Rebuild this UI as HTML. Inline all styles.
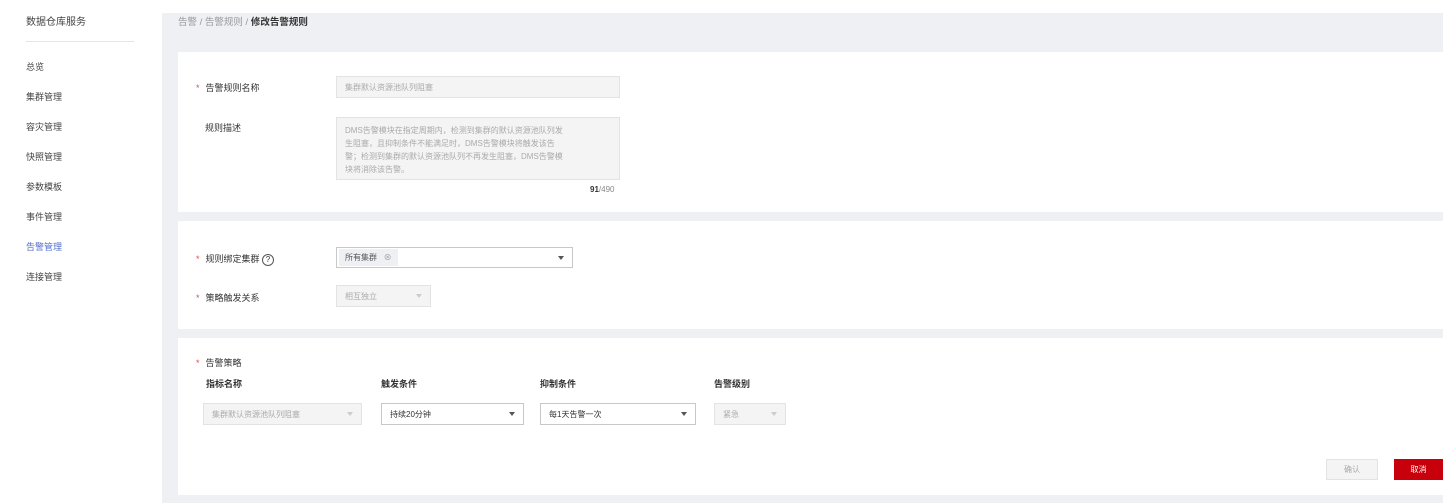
<!DOCTYPE html>
<html><head><meta charset="utf-8"><style>
*{box-sizing:border-box;margin:0;padding:0}
body{width:1443px;height:503px;overflow:hidden;background:#fff;font-family:"Liberation Sans","Noto Sans CJK SC",sans-serif;font-size:9px;color:#333;position:relative}
.abs{position:absolute}
.side{left:0;top:0;width:162px;height:503px;background:#fff}
.main{left:162px;top:13px;width:1281px;height:490px;background:#eef0f4}
.card{position:absolute;left:178px;width:1265px;background:#fff}
.lbl{position:absolute;font-size:9px;color:#333}
.star{color:#e04b4b;margin-right:6px}
.inp{position:absolute;border:1px solid #e3e3e3;background:#f4f4f4;color:#aaa;font-size:8px;padding-left:8px;display:flex;align-items:center}
.sel{position:absolute;border:1px solid #c8c8c8;background:#fff;color:#333;font-size:8px;padding-left:8px;display:flex;align-items:center}
.arr{position:absolute;right:8px;top:50%;margin-top:-2px;border-left:3px solid transparent;border-right:3px solid transparent;border-top:4px solid #555}
.dis .arr{border-top-color:#ccc}
.nav{position:absolute;left:26px;font-size:9px;color:#444}
</style></head><body>
<div class="abs side">
<div class="nav" style="top:13px;font-size:10px">数据仓库服务</div>
<div class="abs" style="left:26px;top:41px;width:108px;height:1px;background:#e6e6e6"></div>
<div class="nav" style="top:60px">总览</div>
<div class="nav" style="top:90px">集群管理</div>
<div class="nav" style="top:120px">容灾管理</div>
<div class="nav" style="top:150px">快照管理</div>
<div class="nav" style="top:180px">参数模板</div>
<div class="nav" style="top:210px">事件管理</div>
<div class="nav" style="top:240px;color:#526ecc">告警管理</div>
<div class="nav" style="top:270px">连接管理</div>
</div>
<div class="abs main"></div>
<div class="abs" style="left:178px;top:14px;font-size:9.5px;color:#999">告警 / 告警规则 / <b style="color:#333">修改告警规则</b></div>

<div class="card" style="top:52px;height:160px"></div>
<div class="lbl" style="left:196px;top:81px"><span class="star">*</span>告警规则名称</div>
<div class="inp" style="left:336px;top:76px;width:284px;height:22px">集群默认资源池队列阻塞</div>
<div class="lbl" style="left:205px;top:121px">规则描述</div>
<div class="inp" style="left:336px;top:117px;width:284px;height:63px;align-items:flex-start;padding-top:6px;line-height:13px;color:#aaa;white-space:nowrap">DMS告警模块在指定周期内，检测到集群的默认资源池队列发<br>生阻塞，且抑制条件不能满足时，DMS告警模块将触发该告<br>警；检测到集群的默认资源池队列不再发生阻塞，DMS告警模<br>块将消除该告警。</div>
<div class="lbl" style="left:590px;top:185px;font-size:8px;color:#888"><b style="color:#333">91</b>/490</div>

<div class="card" style="top:221px;height:108px"></div>
<div class="lbl" style="left:196px;top:252px"><span class="star">*</span>规则绑定集群 <span style="display:inline-block;width:12px;height:12px;border:1px solid #555;border-radius:50%;text-align:center;line-height:10px;font-size:8px;vertical-align:middle">?</span></div>
<div class="sel" style="left:336px;top:247px;width:237px;height:21px;padding-left:2px"><span style="background:#eef0f3;padding:3px 6px;color:#555">所有集群 &nbsp;&nbsp;<span style="color:#999">⊗</span></span><i class="arr"></i></div>
<div class="lbl" style="left:196px;top:291px"><span class="star">*</span>策略触发关系</div>
<div class="inp dis" style="left:336px;top:285px;width:95px;height:22px">相互独立<i class="arr"></i></div>

<div class="card" style="top:338px;height:157px"></div>
<div class="lbl" style="left:196px;top:356px"><span class="star">*</span>告警策略</div>
<div class="lbl" style="left:206px;top:377px;font-weight:bold">指标名称</div>
<div class="lbl" style="left:381px;top:377px;font-weight:bold">触发条件</div>
<div class="lbl" style="left:540px;top:377px;font-weight:bold">抑制条件</div>
<div class="lbl" style="left:714px;top:377px;font-weight:bold">告警级别</div>
<div class="inp dis" style="left:203px;top:403px;width:159px;height:22px">集群默认资源池队列阻塞<i class="arr"></i></div>
<div class="sel" style="left:381px;top:403px;width:143px;height:22px">持续20分钟<i class="arr"></i></div>
<div class="sel" style="left:540px;top:403px;width:156px;height:22px">每1天告警一次<i class="arr"></i></div>
<div class="inp dis" style="left:714px;top:403px;width:72px;height:22px">紧急<i class="arr"></i></div>
<div class="inp" style="left:1326px;top:459px;width:52px;height:21px;justify-content:center;padding:0">确认</div>
<div class="abs" style="left:1394px;top:459px;width:49px;height:21px;background:#c7000b;color:#fff;font-size:8px;display:flex;align-items:center;justify-content:center">取消</div>
</body></html>
